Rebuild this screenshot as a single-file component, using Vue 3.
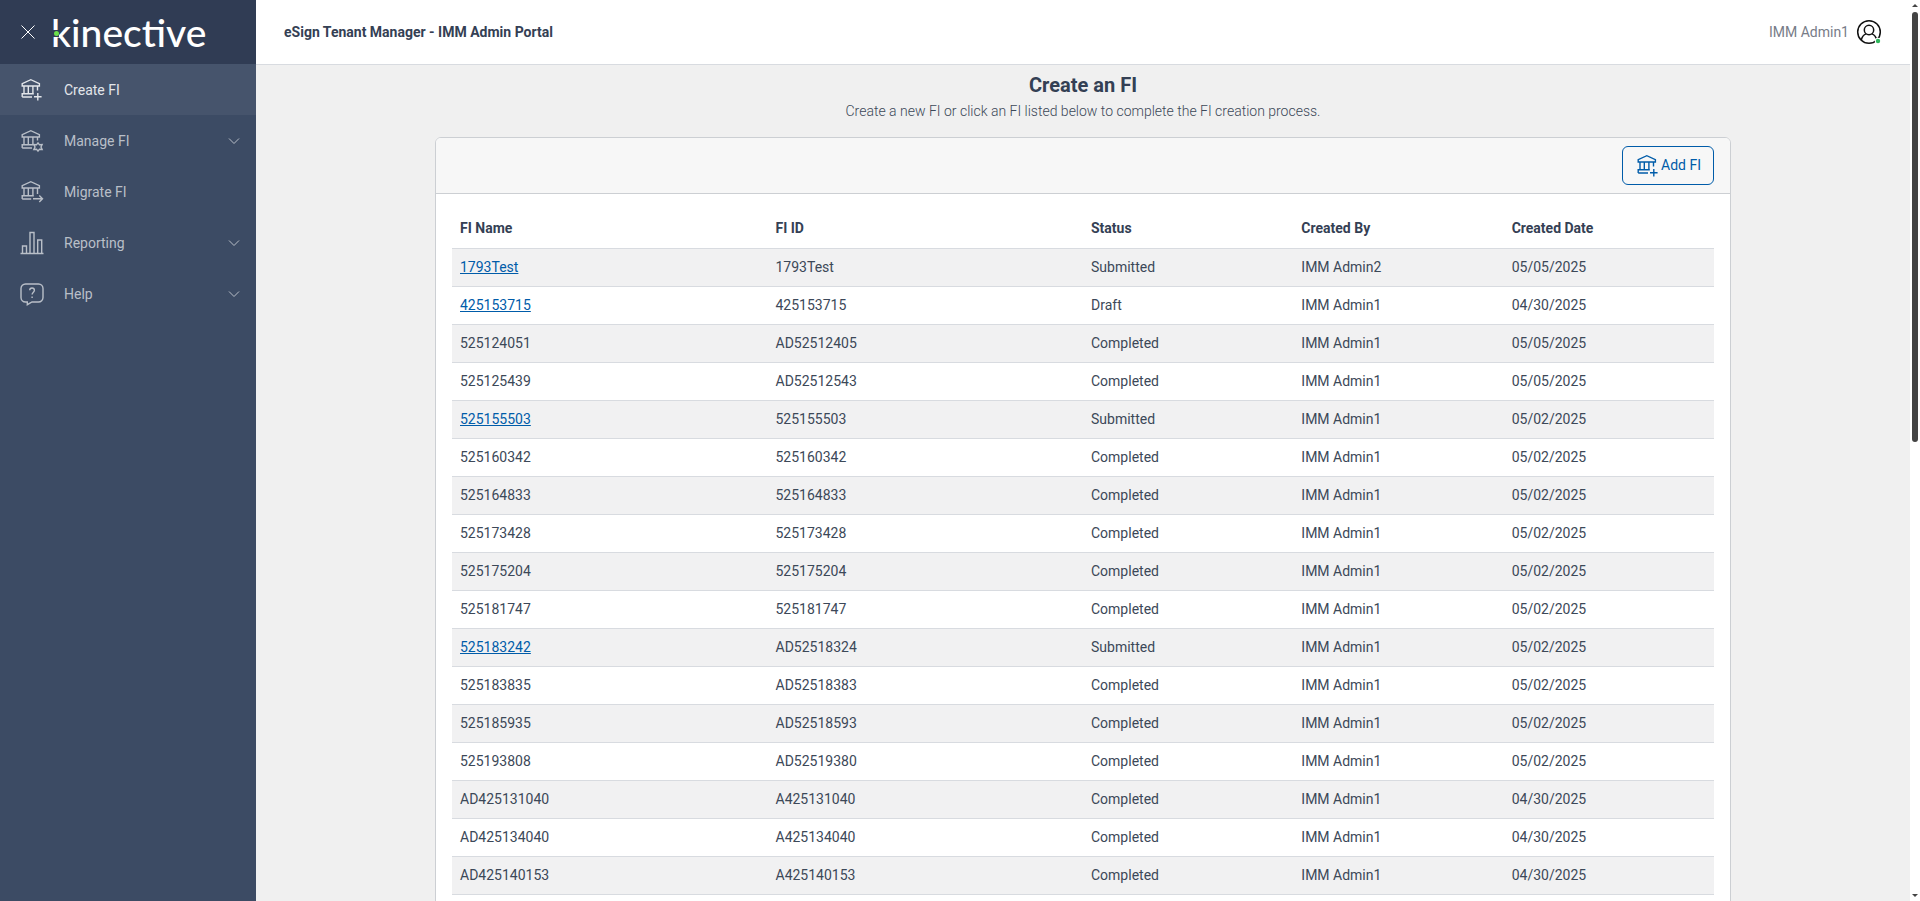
<script setup>
const nav = [
  { label: 'Create FI', icon: 'create', active: true },
  { label: 'Manage FI', icon: 'manage', group: true },
  { label: 'Migrate FI', icon: 'migrate' },
  { label: 'Reporting', icon: 'report', group: true },
  { label: 'Help', icon: 'help', group: true },
]

const bankIcons = ['create', 'manage', 'migrate']

const columns = ['FI Name', 'FI ID', 'Status', 'Created By', 'Created Date']

const rows = [
  ['1793Test', '1793Test', 'Submitted', 'IMM Admin2', '05/05/2025'],
  ['425153715', '425153715', 'Draft', 'IMM Admin1', '04/30/2025'],
  ['525124051', 'AD52512405', 'Completed', 'IMM Admin1', '05/05/2025'],
  ['525125439', 'AD52512543', 'Completed', 'IMM Admin1', '05/05/2025'],
  ['525155503', '525155503', 'Submitted', 'IMM Admin1', '05/02/2025'],
  ['525160342', '525160342', 'Completed', 'IMM Admin1', '05/02/2025'],
  ['525164833', '525164833', 'Completed', 'IMM Admin1', '05/02/2025'],
  ['525173428', '525173428', 'Completed', 'IMM Admin1', '05/02/2025'],
  ['525175204', '525175204', 'Completed', 'IMM Admin1', '05/02/2025'],
  ['525181747', '525181747', 'Completed', 'IMM Admin1', '05/02/2025'],
  ['525183242', 'AD52518324', 'Submitted', 'IMM Admin1', '05/02/2025'],
  ['525183835', 'AD52518383', 'Completed', 'IMM Admin1', '05/02/2025'],
  ['525185935', 'AD52518593', 'Completed', 'IMM Admin1', '05/02/2025'],
  ['525193808', 'AD52519380', 'Completed', 'IMM Admin1', '05/02/2025'],
  ['AD425131040', 'A425131040', 'Completed', 'IMM Admin1', '04/30/2025'],
  ['AD425134040', 'A425134040', 'Completed', 'IMM Admin1', '04/30/2025'],
  ['AD425140153', 'A425140153', 'Completed', 'IMM Admin1', '04/30/2025'],
]
</script>

<template>
  <div class="app">
    <svg class="defs" aria-hidden="true">
      <symbol id="bank" viewBox="0 0 24 24">
        <path d="M2.7 9V6.600L11.300 2.700l8.600 3.900V9zM4.500 9v7.500M8.800 9v7.500M13.400 9v7.500M2.700 20v-3.200h11.600" />
      </symbol>
    </svg>

    <aside class="sidebar">
      <div class="brand">
        <button class="close" type="button" aria-label="Close menu">
          <svg viewBox="0 0 16 16" width="16" height="16"><path d="M1.500 1.500l13 13M14.500 1.500l-13 13" /></svg>
        </button>
        <span class="logo">kinective<i class="gap"><i class="dot"></i></i></span>
      </div>
      <nav class="nav">
        <component
          :is="item.group ? 'button' : 'a'"
          v-for="item in nav"
          :key="item.label"
          :href="item.group ? null : '#'"
          :type="item.group ? 'button' : null"
          class="nav-item"
          :class="{ active: item.active }"
        >
          <svg class="icon" :viewBox="bankIcons.includes(item.icon) ? '0.500 1 24 24' : '0 0 24 24'">
            <template v-if="item.icon === 'create'">
              <use href="#bank" width="24" height="24" />
              <path d="M18 9v4.500M2.700 20h9.800M18.300 16v7.500M14.500 19.800h7.600" />
            </template>
            <template v-else-if="item.icon === 'manage'">
              <use href="#bank" width="24" height="24" />
              <path d="M18 9v3.500M2.700 20h9.800" />
              <path d="M18.500 14.800l1.500 2 2.600-.2-1.100 2.400 1.100 2.400-2.600-.2-1.500 2-1.500-2-2.600.2 1.100-2.400-1.100-2.400 2.600.2z" />
            </template>
            <template v-else-if="item.icon === 'migrate'">
              <use href="#bank" width="24" height="24" />
              <path d="M18 9v6M2.700 20h9M13.500 19.800h9.500M19.800 16.600l3.200 3.200-3.200 3.200" />
            </template>
            <template v-else-if="item.icon === 'report'">
              <path d="M.5 22.500h23M2.500 22.500v-7.500h4v7.500M10 22.500V1.500h4v21M17.700 22.500V9h4v13.500" />
            </template>
            <template v-else>
              <path d="M5.500 2h13a4.500 4.500 0 0 1 4.500 4.500v9a4.500 4.500 0 0 1-4.500 4.500H12l-4.700 2.700V20H5.500A4.500 4.500 0 0 1 1 15.500v-9A4.500 4.500 0 0 1 5.500 2z" />
              <path d="M9.700 8.300c0-3 4.700-3 4.700 0 0 1.900-2.300 1.900-2.300 4.300M12.100 14.500v1.600" />
            </template>
          </svg>
          <span class="nav-label">{{ item.label }}</span>
          <svg v-if="item.group" class="chevron" viewBox="0 0 12 12"><path d="M1 3.500l5 5 5-5" /></svg>
        </component>
      </nav>
    </aside>

    <div class="main">
      <header class="topbar">
        <strong class="portal">eSign Tenant Manager - IMM Admin Portal</strong>
        <button class="user" type="button">
          <span>IMM Admin1</span>
          <svg viewBox="0 0 26 26" width="26" height="26">
            <circle cx="13" cy="13" r="11.300" />
            <circle cx="13" cy="11" r="4.700" />
            <path d="M5.300 21.200c.7-3.600 2.600-5.600 4.800-6.300M15.900 14.900c2.200.7 4.100 2.700 4.800 6.300" />
            <circle class="halo" cx="22" cy="22" r="3.200" />
            <circle class="online" cx="22" cy="22" r="2.200" />
          </svg>
        </button>
      </header>

      <main class="content">
        <h1>Create an FI</h1>
        <p class="hint">Create a new FI or click an FI listed below to complete the FI creation process.</p>

        <section class="card">
          <div class="card-head">
            <button class="add" type="button">
              <svg class="icon" viewBox="0.500 1 24 24">
                <use href="#bank" width="24" height="24" />
                <path d="M18 9v4.500M2.700 20h9.800M18.300 16v7.500M14.500 19.800h7.600" />
              </svg>
              <span>Add FI</span>
            </button>
          </div>
          <div class="card-body">
            <table>
              <colgroup>
                <col class="wide" /><col class="wide" /><col /><col /><col />
              </colgroup>
              <thead>
                <tr><th v-for="c in columns" :key="c" scope="col">{{ c }}</th></tr>
              </thead>
              <tbody>
                <tr v-for="row in rows" :key="row[0]">
                  <td v-for="(cell, i) in row" :key="i">
                    <a v-if="i === 0 && row[2] !== 'Completed'" href="#">{{ cell }}</a>
                    <template v-else>{{ cell }}</template>
                  </td>
                </tr>
              </tbody>
            </table>
          </div>
        </section>
      </main>
    </div>

    <div class="scrollbar" aria-hidden="true">
      <svg viewBox="0 0 6 3" width="6" height="3"><path d="M0 3L3 0l3 3z" /></svg>
      <div class="track"><div class="thumb"></div></div>
      <svg viewBox="0 0 6 3" width="6" height="3"><path d="M0 0h6L3 3z" /></svg>
    </div>
  </div>
</template>

<style>
body {
  margin: 0;
}
</style>

<style scoped>
.app {
  display: flex;
  height: 100vh;
  overflow: hidden;
  background: #f0f0f0;
  color: #3c4858;
  font-family: Roboto, "Liberation Sans", sans-serif;
  font-size: 14px;
  line-height: 21px;
}
.app *,
.app *::before {
  box-sizing: border-box;
}
.defs {
  position: absolute;
  width: 0;
  height: 0;
}
svg {
  flex: none;
  fill: none;
  stroke: currentColor;
}
button {
  padding: 0;
  border: 0;
  background: none;
  color: inherit;
  font: inherit;
  text-align: left;
  cursor: pointer;
}
.sidebar {
  flex: none;
  width: 256px;
  background: #3c4b64;
}
.brand {
  display: flex;
  align-items: center;
  gap: 15px;
  height: 64px;
  padding-left: 20px;
  background: #303c54;
  color: #fff;
}
.close {
  display: flex;
}
.logo {
  position: relative;
  font-family: Lato, sans-serif;
  font-size: 39px;
  font-weight: 500;
  line-height: 62px;
}
.gap {
  position: absolute;
  top: 29px;
  left: 2px;
  display: flex;
  align-items: center;
  justify-content: center;
  width: 6px;
  height: 7px;
  background: #303c54;
}
.dot {
  width: 5px;
  height: 5px;
  border-radius: 50%;
  background: #6be04b;
}
.nav {
  display: flex;
  flex-direction: column;
}
.nav-item {
  display: flex;
  align-items: center;
  gap: 20px;
  height: 51px;
  padding: 0 16px 0 20px;
  color: #b9bfc8;
  text-decoration: none;
}
.nav-item.active {
  background: #46546c;
  color: #e3e6ea;
}
.nav-label {
  flex: 1;
  padding-top: 2px;
}
.icon {
  width: 24px;
  height: 24px;
  stroke-width: 1.4;
}
.chevron {
  width: 12px;
  height: 12px;
}
.main {
  flex: 1;
  display: flex;
  flex-direction: column;
  min-width: 0;
}
.topbar {
  flex: none;
  display: flex;
  align-items: center;
  justify-content: space-between;
  height: 65px;
  padding: 0 28px;
  border-bottom: 1px solid #d8dbe0;
  background: #fff;
}
.portal {
  color: #344054;
}
.user {
  display: flex;
  align-items: center;
  gap: 7px;
  color: #777c88;
}
.user svg {
  stroke: #111;
  stroke-width: 1.5;
}
.user .halo {
  fill: #fff;
  stroke: none;
}
.user .online {
  fill: #2eb85c;
  stroke: none;
}
.content {
  flex: 1;
  display: flex;
  flex-direction: column;
  align-items: center;
  min-height: 0;
  padding: 8px 16px 0;
}
h1 {
  margin: 0;
  font-size: 20px;
  line-height: 24px;
  color: #344054;
}
.hint {
  margin: 4px 0 15px;
  font-weight: 300;
}
.card {
  flex: 1 0 auto;
  width: 100%;
  max-width: 1296px;
  border: 1px solid #cccfd3;
  border-radius: 6px 6px 0 0;
  background: #fff;
}
.card-head {
  display: flex;
  justify-content: flex-end;
  padding: 8px 16px;
  border-bottom: 1px solid #cccfd3;
  border-radius: 5px 5px 0 0;
  background: #f7f7f7;
}
.add {
  display: flex;
  align-items: center;
  gap: 1px;
  height: 39px;
  padding: 0 12px 0 13px;
  border: 1px solid #005ca9;
  border-radius: 6px;
  color: #005ca9;
}
.card-body {
  padding: 15px 16px;
}
table {
  width: 100%;
  border-collapse: collapse;
  table-layout: fixed;
}
.wide {
  width: 25%;
}
th,
td {
  height: 38px;
  padding: 0 8px;
  border-bottom: 1px solid #d8dbe0;
  text-align: left;
}
th {
  height: 39px;
  color: #344054;
}
tbody tr:nth-child(odd) {
  background: #f1f1f2;
}
td a {
  color: #005ca9;
}
.scrollbar {
  flex: none;
  display: flex;
  flex-direction: column;
  align-items: center;
  gap: 5px;
  width: 10px;
  padding: 4px 0;
  background: #fff;
}
.scrollbar svg {
  fill: #444;
  stroke: none;
}
.track {
  flex: 1;
  width: 6px;
}
.thumb {
  height: 49%;
  border-radius: 3px;
  background: #444;
}
</style>
